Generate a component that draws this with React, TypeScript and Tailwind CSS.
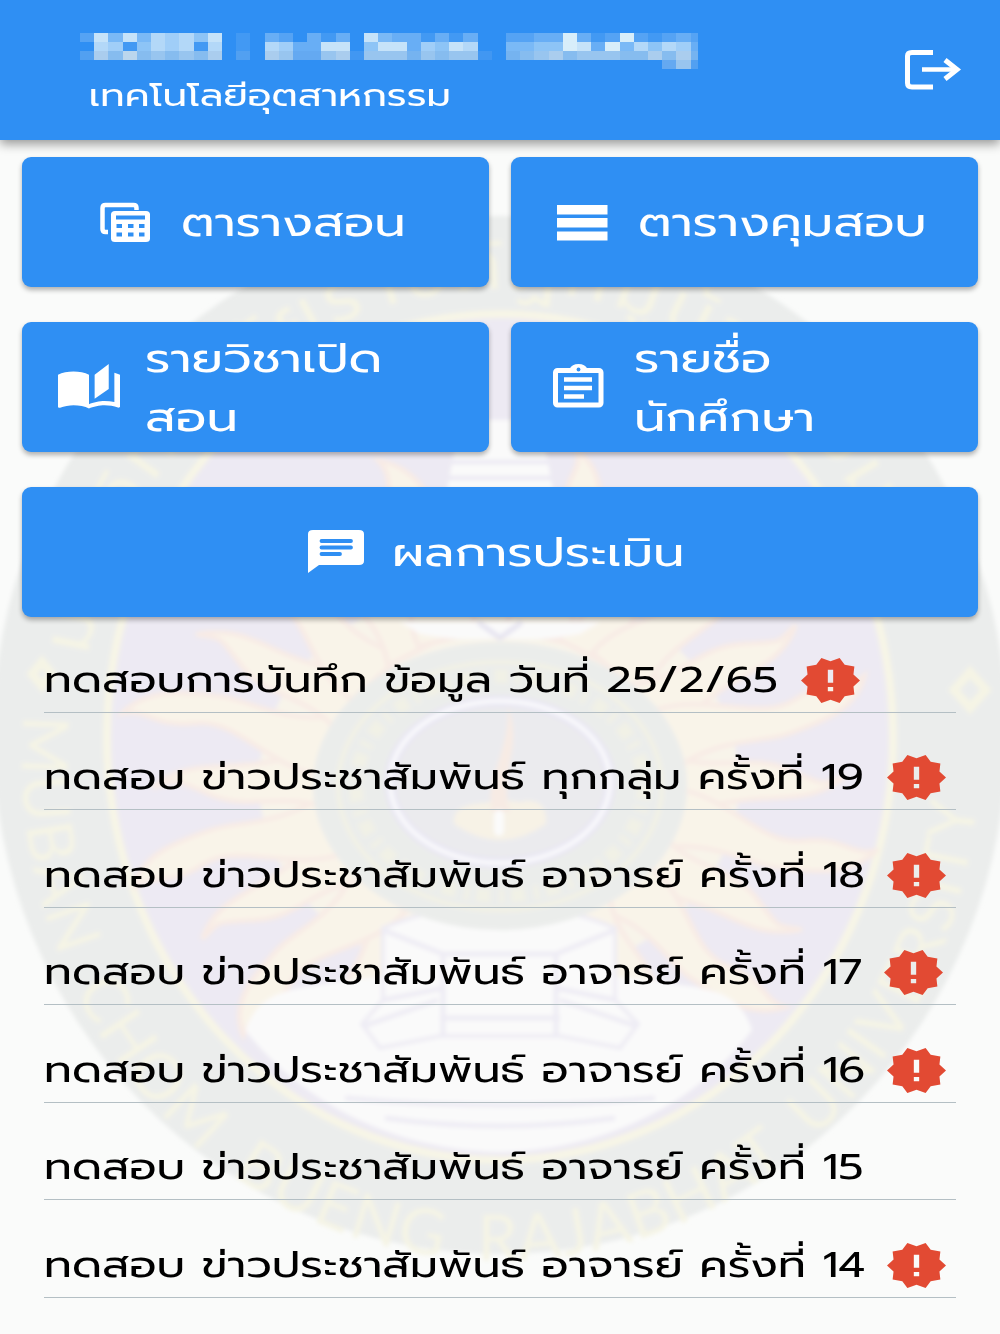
import type { ReactNode } from "react";
import { MdAutoStories, MdNewReleases } from "react-icons/md";

const news = [
  { text: "ทดสอบการบันทึก ข้อมูล วันที่ 25/2/65", width: "w-[757px]", isNew: true },
  { text: "ทดสอบ ข่าวประชาสัมพันธ์ ทุกกลุ่ม ครั้งที่ 19", width: "w-[843px]", isNew: true },
  { text: "ทดสอบ ข่าวประชาสัมพันธ์ อาจารย์ ครั้งที่ 18", width: "w-[843px]", isNew: true },
  { text: "ทดสอบ ข่าวประชาสัมพันธ์ อาจารย์ ครั้งที่ 17", width: "w-[840px]", isNew: true },
  { text: "ทดสอบ ข่าวประชาสัมพันธ์ อาจารย์ ครั้งที่ 16", width: "w-[843px]", isNew: true },
  { text: "ทดสอบ ข่าวประชาสัมพันธ์ อาจารย์ ครั้งที่ 15", width: "w-[843px]", isNew: false },
  { text: "ทดสอบ ข่าวประชาสัมพันธ์ อาจารย์ ครั้งที่ 14", width: "w-[843px]", isNew: true },
];

// one entry per column, each digit is the brightness of a cell from top to bottom
const nameColumns = [
  "202", "877", "465", "818", "455", "776", "665", "776", "515", "877", "000",
  "112", "000", "377", "266", "033", "333", "186", "387", "001", "856", "486",
  "386", "334", "166", "355", "186", "376", "001", "000", "244", "245", "356",
  "357", "995", "386", "136", "296", "945", "275", "157", "2753", "3676", "2342",
];

function NameMosaic() {
  return (
    <svg className="block h-9 w-[618px]" viewBox="0 0 618 36" shapeRendering="crispEdges">
      {nameColumns.map((col, x) =>
        col.split("").map((v, y) => (
          <rect
            key={`${x}-${y}`}
            x={x * 14.2}
            y={y * 9}
            width={x === 43 ? 7 : 14.2}
            height="9"
            fill={y > 1 ? "#d6e4ec" : "#e2f3fa"}
            opacity={Number(v) / 9.5}
          />
        ))
      )}
    </svg>
  );
}

function Sun() {
  const rays = Array.from({ length: 24 }, (_, i) => i * 15);
  return (
    <g>
      <ellipse cx="499" cy="782" rx="240" ry="200" fill="#f8f4ea" />
      {rays.map((deg, i) => (
        <g key={deg} transform={`translate(499 782) scale(1 0.88) rotate(${deg})`}>
          <path
            d={i % 2 ? "M170 -38C225 -46 270 2 310 -14S360 -10 384 -22C366 16 322 18 294 22S220 6 170 34Z" : "M170 -30C220 -10 250 -34 290 -14S320 2 346 -6C316 22 290 16 250 20S200 34 170 32Z"}
            fill="#f9f4e9"
            stroke="#f8ebe5"
            strokeWidth="5"
          />
        </g>
      ))}
    </g>
  );
}

function Seal() {
  return (
    <svg className="absolute inset-0 h-full w-full" viewBox="0 0 1000 1334">
      <defs>
        <clipPath id="inner">
          <ellipse cx="500" cy="737" rx="393" ry="423" />
        </clipPath>
        <path id="english" d="M24 715A478 500 0 1 0 976 715" />
        <path id="thai" d="M88 655A418 440 0 0 1 912 655" />
        <filter id="soft">
          <feGaussianBlur stdDeviation="2" />
        </filter>
      </defs>
      <g filter="url(#soft)">
        <ellipse cx="500" cy="735" rx="507" ry="519" fill="#ebedec" />
        <ellipse cx="500" cy="737" rx="393" ry="423" fill="#edeaf3" stroke="#f7f5e6" strokeWidth="8" />
        <g clipPath="url(#inner)">
          <Sun />
          <path d="M460 420h80l14 75h-108zM400 622h200l-20 12q-40 8-80 4q-40 4-80-4z" fill="#fafafa" />
          <path d="M452 462h96M448 478h104" stroke="#ebe8f3" strokeWidth="4" />
          <path d="M478 622l22 16 22-16" fill="none" stroke="#e6e4f0" strokeWidth="5" />
          <path d="M245 1030C262 985 300 990 335 982C410 970 590 970 665 982C700 990 738 985 752 1030C700 1100 610 1150 500 1152C390 1150 300 1100 245 1030Z" fill="#fafafa" />
          <path d="M383 928Q500 880 615 928V1000L638 1024L620 1048L560 1036H440L380 1048L362 1024L383 1000Z" fill="#fafafa" stroke="#eeecf4" strokeWidth="4" />
          <path d="M383 930L443 954H556L615 930M443 954V1034M556 954V1034M383 1000L443 988M615 1000L556 988M440 1018H560M364 1026L438 1000M636 1026L560 1000" fill="none" stroke="#eeecf4" strokeWidth="5" />
          <path d="M345 1098Q500 1112 655 1098M385 1118Q500 1134 615 1118" fill="none" stroke="#eeecf4" strokeWidth="5" />
        </g>
        <ellipse cx="500" cy="786" rx="187" ry="144" fill="#ebedeb" />
        <ellipse cx="500" cy="786" rx="162" ry="124" fill="none" stroke="#f3f2e4" strokeWidth="4" />
        <ellipse cx="500" cy="786" rx="144" ry="110" fill="none" stroke="#f1f1e6" strokeWidth="14" strokeDasharray="14 7 5 9" />
        <ellipse cx="500" cy="782" rx="110" ry="81" fill="#ebebee" stroke="#e8e6f2" strokeWidth="12" />
        <ellipse cx="500" cy="782" rx="110" ry="81" fill="none" stroke="#f9f9fc" strokeWidth="5" />
        <path d="M500 800C480 806 452 800 454 824Q500 856 546 824Q548 796 520 802Z" fill="#f7f2e6" />
        <path d="M508 706C524 750 498 770 510 812L492 812C484 780 510 752 508 706Z" fill="#f7ebe4" />
        <path d="M499 815v16" stroke="#fbfbfb" strokeWidth="10" strokeLinecap="round" />
        <g fill="#f5f4e5" fontFamily="Lato, sans-serif" fontSize="64">
          <text wordSpacing="16">
            <textPath href="#english" textLength="1540">MUBAN CHOM BUENG RAJABHAT UNIVERSITY</textPath>
          </text>
          <text fontFamily="Prompt, sans-serif" fontSize="70">
            <textPath href="#thai" textLength="1150">มหาวิทยาลัยราชภัฏหมู่บ้านจอมบึง</textPath>
          </text>
          <path d="M970 672l16 18-16 18-16-18zM42 662l10 12-10 12-10-12z" fill="none" stroke="#f5f4e5" strokeWidth="9" />
        </g>
      </g>
    </svg>
  );
}

function LogoutIcon() {
  return (
    <svg className="h-[42px] w-[58px]" viewBox="0 0 58 42" fill="none" stroke="#fff" strokeWidth="5">
      <path d="M29 3.5H8Q3.5 3.5 3.5 7V34Q3.5 38 8 38H29" />
      <path d="M18 20.5H53" strokeWidth="4.5" />
      <path d="M41 11L53 20.5L41 30" />
    </svg>
  );
}

function TableIcon() {
  return (
    <svg className="h-10 w-[51px]" viewBox="0 0 51 40" fill="#fff">
      <path d="M8 30H5.5Q2.5 30 2.5 27V6Q2.5 3 5.5 3H33.5Q36.5 3 36.5 6V8" fill="none" stroke="#fff" strokeWidth="4.5" />
      <path fillRule="evenodd" d="M15 9H46Q50 9 50 12.5V36.5Q50 40 46 40H15Q11 40 11 36.5V12.5Q11 9 15 9ZM16 13.5V17.5H45V13.5ZM16.5 22V26H22V22ZM28 22V26H33.5V22ZM39 22V26H44.5V22ZM16.5 30.5V34.5H22V30.5ZM28 30.5V34.5H33.5V30.5ZM39 30.5V34.5H44.5V30.5Z" />
    </svg>
  );
}

function RowsIcon() {
  return (
    <svg className="mt-px h-9 w-[51px]" viewBox="0 0 51 36" fill="#fff">
      <path d="M0 0H50.5V9.5H0zM0 13H50.5V22.5H0zM0 26.5H50.5V35.5H0z" />
    </svg>
  );
}

function ClipboardIcon() {
  return (
    <svg className="-mt-[3px] h-11 w-[51px]" viewBox="0 0 51 44" fill="none" stroke="#fff">
      <rect x="2.5" y="6.5" width="45.5" height="34.5" rx="2" strokeWidth="5" />
      <path d="M16.5 5Q19 0 25.5 0T34.5 5L36 7H15Z" fill="#fff" stroke="none" />
      <circle cx="25.5" cy="5.5" r="1.9" fill="#2f8ff3" stroke="none" />
      <path d="M11 15.5H39M11 24H39M11 32.5H31" strokeWidth="4.5" />
    </svg>
  );
}

function ChatIcon() {
  return (
    <svg className="-mt-0.5 h-[43px] w-14" viewBox="0 0 56 43" fill="#fff">
      <path d="M5 0H51Q56 0 56 4V31Q56 35 51 35H11L0 43V4Q0 0 5 0Z" />
      <path d="M13.5 11H43M13.5 17.5H43M13.5 24H32" stroke="#2f8ff3" strokeWidth="3.8" strokeLinecap="round" />
    </svg>
  );
}

function Tile({ icon, children, className }: { icon: ReactNode; children: ReactNode; className: string }) {
  return (
    <button
      className={`flex h-[130px] items-center rounded-[9px] bg-[#2f8ff3] text-left text-[40px] leading-[59px] text-white shadow-[0_3px_5px_rgba(0,0,0,0.3)] ${className}`}
    >
      {icon}
      <span className="block origin-left scale-x-[1.247] pt-px whitespace-nowrap">{children}</span>
    </button>
  );
}

export default function App() {
  return (
    <div className="relative h-[1334px] w-[1000px] overflow-hidden bg-[#fafbfa] font-['Prompt','Noto_Sans_Thai',sans-serif]">
      <Seal />

      <div className="relative">
        <header className="flex h-[140px] justify-between bg-[#2f8ff3] pt-[33px] pr-[38px] pl-[80px] shadow-[0_4px_10px_rgba(0,0,0,0.4)]">
          <div>
            <NameMosaic />
            <p className="origin-left scale-x-[1.254] pl-[7px] text-[31px] leading-[54px] text-white">เทคโนโลยีอุตสาหกรรม</p>
          </div>
          <button className="mt-4 self-start">
            <LogoutIcon />
          </button>
        </header>

        <div className="grid grid-cols-2 gap-x-[22px] gap-y-[35px] px-[22px] pt-[17px]">
          <Tile icon={<TableIcon />} className="gap-[30px] pl-[78px]">
            ตารางสอน
          </Tile>
          <Tile icon={<RowsIcon />} className="gap-[30px] pl-[46px]">
            ตารางคุมสอบ
          </Tile>
          <Tile
            icon={<MdAutoStories viewBox="1 1 22 20.7" preserveAspectRatio="none" className="-mt-[2px] h-[45px] w-[62px]" />}
            className="gap-[25px] pl-9"
          >
            รายวิชาเปิด
            <br />
            สอน
          </Tile>
          <Tile icon={<ClipboardIcon />} className="gap-[30px] pl-[42px]">
            รายชื่อ
            <br />
            นักศึกษา
          </Tile>
          <Tile icon={<ChatIcon />} className="col-span-2 gap-7 pl-[286px]">
            ผลการประเมิน
          </Tile>
        </div>

        <ul className="-mt-0.5 px-[44px]">
          {news.map((item) => (
            <li key={item.text} className="flex h-[97.5px] items-center border-b-[1.5px] border-[#b4bfc4] pt-[33px]">
              <span className={`shrink-0 whitespace-nowrap ${item.width}`}>
                <span className="block origin-left scale-x-[1.249] text-[35.6px] leading-[54px] text-black">{item.text}</span>
              </span>
              {item.isNew && (
                <MdNewReleases
                  viewBox="1 1.54 22 20.92"
                  preserveAspectRatio="none"
                  className="mt-px h-[45px] w-[59px] shrink-0 text-[#e24a33]"
                />
              )}
            </li>
          ))}
        </ul>
      </div>
    </div>
  );
}
